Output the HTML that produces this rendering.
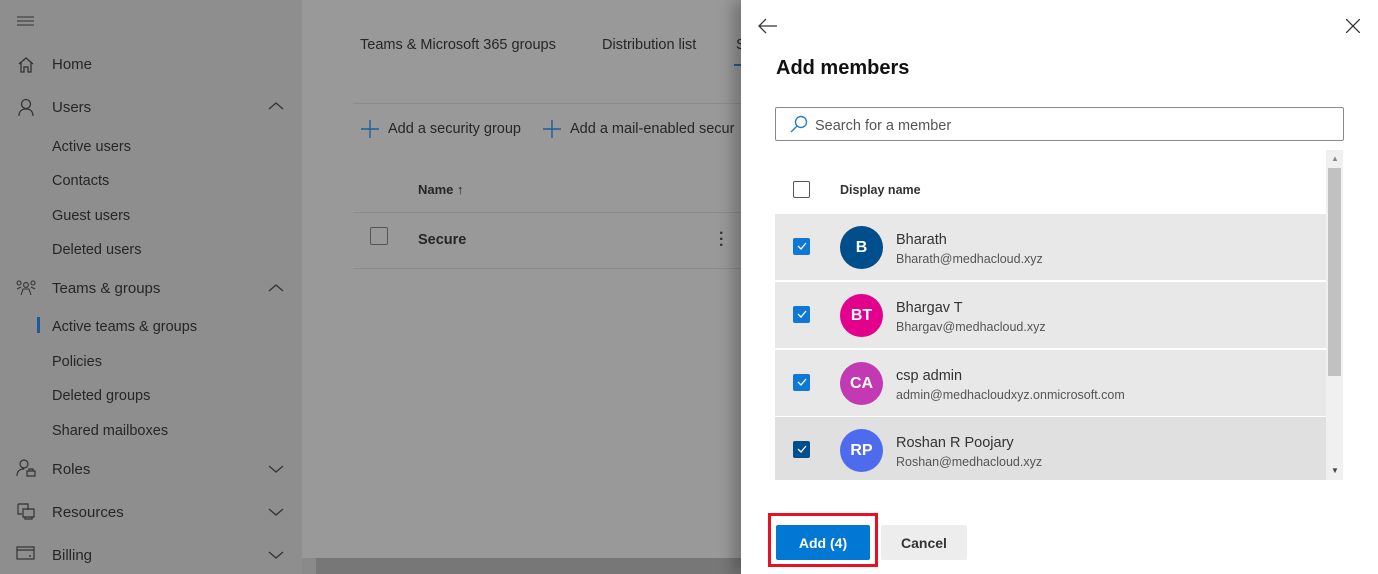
<!DOCTYPE html>
<html><head><meta charset="utf-8"><style>
*{margin:0;padding:0;box-sizing:border-box}
body{width:1378px;height:574px;overflow:hidden;position:relative;font-family:"Liberation Sans",sans-serif;background:#999;color:#222}
.a{position:absolute;white-space:nowrap}
#side{position:absolute;left:0;top:0;width:302px;height:574px;background:#8e8e8e}
.nav{font-size:15px;color:#262626}
.sub{font-size:14.5px;color:#262626}
svg{position:absolute}
.main{font-size:14.5px;color:#262626}
#panel{position:absolute;left:741px;top:0;width:637px;height:574px;background:#fff;box-shadow:-8px 0 14px rgba(0,0,0,.25)}
.row{position:absolute;left:34px;width:551px;height:66px;background:#e8e8e8}
.cb{position:absolute;left:18px;top:24px;width:17px;height:17px;background:#0f78d4;border-radius:2px}
.av{position:absolute;left:65px;top:12px;width:43px;height:43px;border-radius:50%;color:#fff;font-weight:bold;font-size:16px;text-align:center;line-height:43px}
.nm{position:absolute;left:121px;top:18px;font-size:14.5px;color:#333}
.em{position:absolute;left:121px;top:38px;font-size:12.5px;color:#555}
</style></head><body>
<div id="side">
<svg style="left:17px;top:15px" width="18" height="12"><path d="M0 2H17M0 6H17M0 10H17" stroke="#333" stroke-width="1"/></svg>
<svg style="left:17px;top:56px" width="18" height="18" fill="none" stroke="#333" stroke-width="1.3"><path d="M2 8L9 2L16 8M4 6V16H7V11H11V16H14V6"/></svg>
<div class="a nav" style="left:52px;top:56px">Home</div>
<svg style="left:17px;top:98px" width="18" height="20" fill="none" stroke="#333" stroke-width="1.3"><circle cx="9" cy="6" r="4.5"/><path d="M2 18C2 13 5 11 9 11C13 11 16 13 16 18"/></svg>
<div class="a nav" style="left:52px;top:99px">Users</div>
<svg style="left:268px;top:101px" width="16" height="10" fill="none" stroke="#333" stroke-width="1.3"><path d="M1 8L8 2L15 8"/></svg>
<div class="a sub" style="left:52px;top:139px">Active users</div>
<div class="a sub" style="left:52px;top:173px">Contacts</div>
<div class="a sub" style="left:52px;top:208px">Guest users</div>
<div class="a sub" style="left:52px;top:242px">Deleted users</div>
<svg style="left:16px;top:280px" width="20" height="16" fill="none" stroke="#333" stroke-width="1.1"><circle cx="3" cy="3" r="2"/><circle cx="10" cy="5" r="2.4"/><circle cx="17" cy="3" r="2"/><path d="M1 9L5 7M19 9L15 7M5 15L7 9H13L15 15"/></svg>
<div class="a nav" style="left:52px;top:280px">Teams &amp; groups</div>
<svg style="left:268px;top:283px" width="16" height="10" fill="none" stroke="#333" stroke-width="1.3"><path d="M1 8L8 2L15 8"/></svg>
<div class="a" style="left:37px;top:317px;width:3px;height:16px;background:#1d5a9a"></div>
<div class="a sub" style="left:52px;top:319px">Active teams &amp; groups</div>
<div class="a sub" style="left:52px;top:354px">Policies</div>
<div class="a sub" style="left:52px;top:388px">Deleted groups</div>
<div class="a sub" style="left:52px;top:423px">Shared mailboxes</div>
<svg style="left:16px;top:459px" width="20" height="18" fill="none" stroke="#333" stroke-width="1.2"><circle cx="8" cy="5" r="4"/><path d="M1 17C1 12 4 10 8 10M11 12H19V17H11ZM13 12V10H17V12"/></svg>
<div class="a nav" style="left:52px;top:461px">Roles</div>
<svg style="left:268px;top:464px" width="16" height="10" fill="none" stroke="#333" stroke-width="1.3"><path d="M1 2L8 8L15 2"/></svg>
<svg style="left:16px;top:502px" width="20" height="18" fill="none" stroke="#333" stroke-width="1.2"><path d="M2 2H12V8M2 2V12H6M7 7H18V15H7ZM9 15V17H16V15"/></svg>
<div class="a nav" style="left:52px;top:504px">Resources</div>
<svg style="left:268px;top:507px" width="16" height="10" fill="none" stroke="#333" stroke-width="1.3"><path d="M1 2L8 8L15 2"/></svg>
<svg style="left:16px;top:546px" width="20" height="16" fill="none" stroke="#333" stroke-width="1.2"><rect x="1" y="1" width="17" height="12"/><path d="M1 4H18M13 10H15"/></svg>
<div class="a nav" style="left:52px;top:547px">Billing</div>
<svg style="left:268px;top:550px" width="16" height="10" fill="none" stroke="#333" stroke-width="1.3"><path d="M1 2L8 8L15 2"/></svg>
</div>
<div class="a main" style="left:360px;top:37px">Teams &amp; Microsoft 365 groups</div>
<div class="a main" style="left:602px;top:37px">Distribution list</div>
<div class="a main" style="left:736px;top:37px">S</div>
<div class="a" style="left:734px;top:64px;width:7px;height:2px;background:#2a5a8a"></div>
<div class="a" style="left:353px;top:103px;width:388px;height:1px;background:#8a8a8a"></div>
<svg style="left:361px;top:120px" width="18" height="18" stroke="#1c5d9c" stroke-width="1.4"><path d="M9 0V18M0 9H18"/></svg>
<div class="a main" style="left:388px;top:121px">Add a security group</div>
<svg style="left:543px;top:120px" width="18" height="18" stroke="#1c5d9c" stroke-width="1.4"><path d="M9 0V18M0 9H18"/></svg>
<div class="a main" style="left:570px;top:121px">Add a mail-enabled secur</div>
<div class="a" style="left:418px;top:182px;font-size:13px;font-weight:bold;color:#262626">Name ↑</div>
<div class="a" style="left:353px;top:212px;width:388px;height:1px;background:#8a8a8a"></div>
<div class="a" style="left:370px;top:227px;width:18px;height:18px;border:1.5px solid #555;border-radius:2px"></div>
<div class="a" style="left:418px;top:232px;font-size:14.5px;font-weight:bold;color:#262626">Secure</div>
<div class="a" style="left:719px;top:231px;font-size:16px;font-weight:bold;color:#333;line-height:6px">·<br>·<br>·</div>
<div class="a" style="left:353px;top:268px;width:388px;height:1px;background:#8a8a8a"></div>
<div class="a" style="left:302px;top:558px;width:439px;height:16px;background:#777"></div>
<div class="a" style="left:302px;top:558px;width:14px;height:16px;background:#8a8a8a"></div>
<div id="panel">
<svg style="left:17px;top:18px" width="20" height="16" fill="none" stroke="#333" stroke-width="1.3"><path d="M19 8H1M8 1L1 8L8 15"/></svg>
<svg style="left:605px;top:19px" width="14" height="14" stroke="#333" stroke-width="1.3"><path d="M0 0L14 14M14 0L0 14"/></svg>
<div class="a" style="left:35px;top:57px;font-size:20px;font-weight:bold;color:#111">Add members</div>
<div class="a" style="left:34px;top:107px;width:569px;height:34px;border:1px solid #8a8a8a;border-radius:2px"></div>
<svg style="left:49px;top:115px" width="18" height="18" fill="none" stroke="#2b7cd3" stroke-width="1.4"><circle cx="11" cy="7" r="5.5"/><path d="M7 11L1 17"/></svg>
<div class="a" style="left:74px;top:118px;font-size:14.5px;color:#555">Search for a member</div>
<div class="a" style="left:52px;top:181px;width:17px;height:17px;border:1.3px solid #555;border-radius:2px"></div>
<div class="a" style="left:99px;top:183px;font-size:12.5px;font-weight:bold;color:#333">Display name</div>
<div class="a" style="left:585px;top:150px;width:17px;height:330px;background:#f0f0f0"></div>
<div class="a" style="left:587px;top:168px;width:13px;height:208px;background:#c1c1c1"></div>
<div class="a" style="left:590px;top:154px;font-size:8px;color:#888">▲</div>
<div class="a" style="left:590px;top:466px;font-size:8px;color:#444">▼</div>
<div class="row" style="top:214px"><div class="cb"></div><svg style="left:22px;top:28px" width="10" height="9" fill="none" stroke="#fff" stroke-width="1.3"><path d="M1 4L4 7L9 1"/></svg><div class="av" style="background:#004e8c">B</div><div class="nm">Bharath</div><div class="em">Bharath@medhacloud.xyz</div></div>
<div class="row" style="top:282px"><div class="cb"></div><svg style="left:22px;top:28px" width="10" height="9" fill="none" stroke="#fff" stroke-width="1.3"><path d="M1 4L4 7L9 1"/></svg><div class="av" style="background:#e3008c">BT</div><div class="nm">Bhargav T</div><div class="em">Bhargav@medhacloud.xyz</div></div>
<div class="row" style="top:350px"><div class="cb"></div><svg style="left:22px;top:28px" width="10" height="9" fill="none" stroke="#fff" stroke-width="1.3"><path d="M1 4L4 7L9 1"/></svg><div class="av" style="background:#c239b3">CA</div><div class="nm">csp admin</div><div class="em">admin@medhacloudxyz.onmicrosoft.com</div></div>
<div class="row" style="top:417px;height:63px;background:#e0e0e0"><div class="cb" style="background:#004e8c"></div><svg style="left:22px;top:28px" width="10" height="9" fill="none" stroke="#fff" stroke-width="1.3"><path d="M1 4L4 7L9 1"/></svg><div class="av" style="background:#4f6bed">RP</div><div class="nm">Roshan R Poojary</div><div class="em">Roshan@medhacloud.xyz</div></div>
<div class="a" style="left:27px;top:513px;width:110px;height:54px;border:3px solid #e81123"></div>
<div class="a" style="left:35px;top:525px;width:94px;height:35px;background:#0078d4;border-radius:2px;color:#fff;font-weight:bold;font-size:14px;text-align:center;line-height:36px">Add (4)</div>
<div class="a" style="left:140px;top:525px;width:86px;height:35px;background:#ededed;border-radius:2px;color:#333;font-weight:bold;font-size:14px;text-align:center;line-height:36px">Cancel</div>
</div>
</body></html>
